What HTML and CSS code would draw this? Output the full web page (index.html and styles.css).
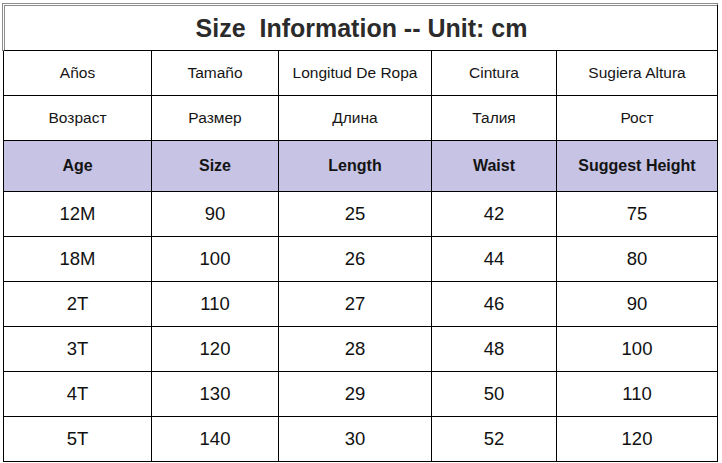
FILE: index.html
```html
<!DOCTYPE html>
<html>
<head>
<meta charset="utf-8">
<link rel="stylesheet" href="styles.css">
</head>
<body>
<div class="sheet">
  <div class="title">Size&nbsp; Information -- Unit: cm</div>
  <div class="grid">
    <div class="cell label">Años</div>
    <div class="cell label">Tamaño</div>
    <div class="cell label">Longitud De Ropa</div>
    <div class="cell label">Cintura</div>
    <div class="cell label">Sugiera Altura</div>

    <div class="cell label">Возраст</div>
    <div class="cell label">Размер</div>
    <div class="cell label">Длина</div>
    <div class="cell label">Талия</div>
    <div class="cell label">Рост</div>

    <div class="cell head">Age</div>
    <div class="cell head">Size</div>
    <div class="cell head">Length</div>
    <div class="cell head">Waist</div>
    <div class="cell head">Suggest Height</div>

    <div class="cell num">12M</div><div class="cell num">90</div><div class="cell num">25</div><div class="cell num">42</div><div class="cell num">75</div>
    <div class="cell num">18M</div><div class="cell num">100</div><div class="cell num">26</div><div class="cell num">44</div><div class="cell num">80</div>
    <div class="cell num">2T</div><div class="cell num">110</div><div class="cell num">27</div><div class="cell num">46</div><div class="cell num">90</div>
    <div class="cell num">3T</div><div class="cell num">120</div><div class="cell num">28</div><div class="cell num">48</div><div class="cell num">100</div>
    <div class="cell num">4T</div><div class="cell num">130</div><div class="cell num">29</div><div class="cell num">50</div><div class="cell num">110</div>
    <div class="cell num">5T</div><div class="cell num">140</div><div class="cell num">30</div><div class="cell num">52</div><div class="cell num">120</div>
  </div>
</div>
</body>
</html>
```

FILE: styles.css
```css
html, body {
  margin: 0;
  padding: 0;
  background: #fff;
}
body {
  font-family: "Liberation Sans", Arial, sans-serif;
  color: #111;
}
.sheet {
  padding-top: 3px;
}
.title {
  box-sizing: border-box;
  margin-left: 2px;
  width: 716px;
  height: 48px;
  border-top: 3px double #8c8c8c;
  border-left: 3px double #8c8c8c;
  border-right: 1px solid #000;
  border-bottom: 1px solid #000;
  display: flex;
  align-items: center;
  justify-content: center;
  font-weight: bold;
  font-size: 25px;
  color: #2b2b2b;
  padding-left: 1px;
}
.grid {
  margin-left: 3px;
  width: 715px;
  box-sizing: border-box;
  border-left: 1px solid #000;
  display: grid;
  grid-template-columns: 148px 127px 153px 125px 161px;
  grid-template-rows: 45px 45px 51px repeat(6, 45px);
}
.cell {
  box-sizing: border-box;
  border-right: 1px solid #000;
  border-bottom: 1px solid #000;
  display: flex;
  align-items: center;
  justify-content: center;
  white-space: nowrap;
}
.label {
  font-size: 15.5px;
  color: #151515;
}
.head {
  background: #c6c3e4;
  font-weight: bold;
  font-size: 16px;
  color: #141414;
}
.num {
  font-size: 18.5px;
  color: #111;
}
```
